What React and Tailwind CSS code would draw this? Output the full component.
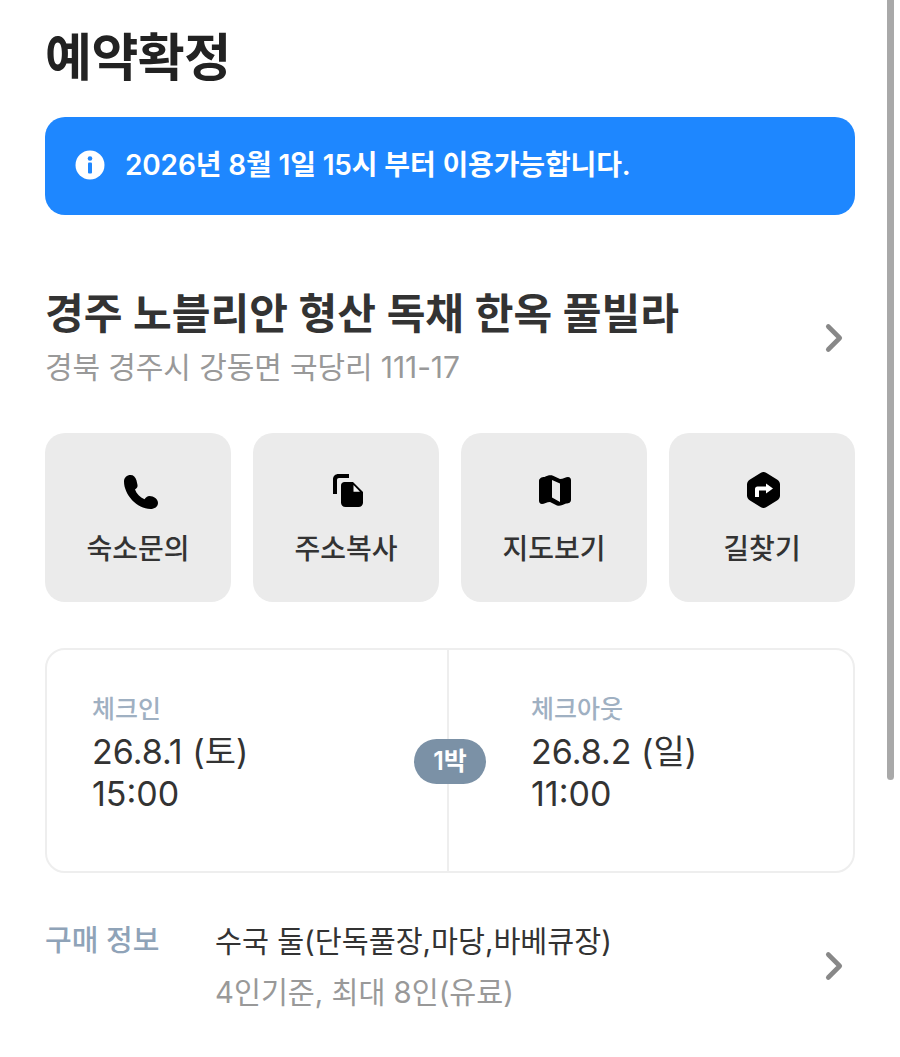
import { ChevronRight } from "lucide-react";

const FONT = "font-['Inter','Noto_Sans_CJK_KR',sans-serif]";

const PhoneIcon = () => (
  <svg viewBox="0 0 34 34" className="ml-[6px] h-[34px] w-[34px]" fill="#000">
    <path d="M0 6.500C0 2.500 3 0 6.500 0 9.500 0 11.500 2 12.500 5.500L13.500 10c.4 2-.6 3.200-2.500 4.500 1.800 4.500 4.800 7.700 9.500 9.800 1.300-2 2.800-3.300 5-3.300 4.300 0 8.500 3 8.500 7 0 3.800-3.500 6-7.500 6C13 34 0 19.500 0 6.500z" />
  </svg>
);

const CopyIcon = () => (
  <svg viewBox="0 0 30 33" className="mt-[-3px] ml-[4px] h-[33px] w-[30px]" fill="#000">
    <path d="M0 20V5.500C0 2.200 2.200 0 5.500 0H16v4H6C4.800 4 4 4.800 4 6v14z" />
    <path d="M11.500 8H20L30 18V28.500C30 31.200 28.200 33 25.500 33H12.500C9.800 33 8 31.200 8 28.500V11.500C8 9.500 9.500 8 11.500 8z" />
    <path fill="#f4f4f4" d="M20.500 11L27 17.800H20.500z" />
  </svg>
);

const MapIcon = () => (
  <svg viewBox="0 0 32 31" className="mt-[-3px] ml-[2px] h-[31px] w-[32px]" fill="#000">
    <path
      fillRule="evenodd"
      d="M0 6C0 3.500 2.500 2 5.500 2 8.500.5 11.500-.3 14 .8L21 4C24 4 27 2 29 2c2 0 3 1.200 3 3.500V24.500C32 27.500 30 28.500 27 28.500c-3 1.500-6.500 3-9 1.900L11 27c-3 0-6 2-8 2-2 0-3-1.500-3-3.500zM13 5L21 8.500V27L13 22.500z"
    />
  </svg>
);

const RouteIcon = () => (
  <svg viewBox="0 0 33 36" className="mt-[-4px] ml-[3px] h-[36px] w-[33px]">
    <path
      fill="#000"
      d="M13.500 1c2-1.200 4-1.200 6 0L30 7.500c2 1.200 3 3 3 5v11c0 2-1 3.800-3 5L19.500 35c-2 1.200-4 1.200-6 0L3 28.500c-2-1.200-3-3-3-5v-11c0-2 1-3.800 3-5z"
    />
    <path fill="#fff" d="M19 11.500L26 16.500 19 21.500V18.500H12V25H8V17c0-1.500 1-2.500 2.500-2.500H19z" />
  </svg>
);

const ACTIONS = [
  { label: "숙소문의", icon: <PhoneIcon /> },
  { label: "주소복사", icon: <CopyIcon /> },
  { label: "지도보기", icon: <MapIcon /> },
  { label: "길찾기", icon: <RouteIcon /> },
];

const DateBlock = ({ label, date, time }) => (
  <div className="flex flex-col">
    <span className="text-[25px] leading-[30px] font-medium text-[#9fb0c2]">{label}</span>
    <span className="mt-[7px] text-[34px] leading-[42px] text-[#333]">{date}</span>
    <span className="text-[34px] leading-[42px] text-[#333]">{time}</span>
  </div>
);

export default function App() {
  return (
    <div className={`${FONT} relative h-[1057px] w-[900px] overflow-hidden bg-white`}>
      <div className="absolute top-0 left-[887px] h-[780px] w-[7px] rounded-b-full bg-[#a9a9a9]" />

      <div className="ml-[45px] flex w-[810px] flex-col">
        <h1 className="mt-[26px] text-[51px] leading-[64px] font-bold tracking-[-0.5px] text-[#222]">예약확정</h1>

        <div className="mt-[27px] flex h-[98px] items-center rounded-[20px] bg-[#1e87ff] pl-[30px] text-white">
          <svg viewBox="0 0 30 30" className="mt-[-3px] h-[30px] w-[30px]">
            <circle cx="15" cy="15" r="14.500" fill="#fff" />
            <circle cx="15" cy="8.500" r="2.300" fill="#1e87ff" />
            <rect x="13" y="12.500" width="4" height="11" rx="1" fill="#1e87ff" />
          </svg>
          <span className="mt-[-2px] ml-[20px] text-[28px] font-semibold tracking-[-0.15px]">
            2026년 8월 1일 15시 부터 이용가능합니다.
          </span>
        </div>

        <div className="mt-[71px] flex items-center justify-between">
          <div>
            <div className="text-[42.100px] leading-[56px] font-semibold text-[#333]">
              경주 노블리안 형산 독채 한옥 풀빌라
            </div>
            <div className="mt-[5px] text-[30px] leading-[40px] tracking-[-0.1px] text-[#999]">
              경북 경주시 강동면 국당리 111-17
            </div>
          </div>
          <ChevronRight size={46} strokeWidth={2.4} className="mt-[2px] mr-[-2px] text-[#888]" />
        </div>

        <div className="mt-[46px] grid grid-cols-4 gap-[22px]">
          {ACTIONS.map((action) => (
            <div
              key={action.label}
              className="flex h-[169px] flex-col items-center rounded-[20px] bg-[#ebebeb] pt-[40px]"
            >
              <div className="flex h-[38px] items-center justify-center">{action.icon}</div>
              <span className="mt-[18px] text-[28px] leading-[40px] font-medium text-[#333]">{action.label}</span>
            </div>
          ))}
        </div>

        <div className="relative mt-[46px] grid h-[225px] grid-cols-[402px_1fr] rounded-[20px] border-2 border-[#eeeeee]">
          <div className="border-r-2 border-[#eeeeee] pt-[44px] pl-[45px]">
            <DateBlock label="체크인" date="26.8.1 (토)" time="15:00" />
          </div>
          <div className="pt-[44px] pl-[82px]">
            <DateBlock label="체크아웃" date="26.8.2 (일)" time="11:00" />
          </div>
          <div className="absolute top-[89px] left-[367px] flex h-[45px] w-[72px] items-center justify-center rounded-full bg-[#7b91a6] text-[25px] font-semibold text-white">
            1박
          </div>
        </div>

        <div className="mt-[46px] flex items-start">
          <span className="w-[170px] text-[29px] leading-[44px] font-medium text-[#8fa3b8]">구매 정보</span>
          <div className="flex-1">
            <div className="mt-[1px] text-[29.300px] leading-[44px] text-[#333]">수국 둘(단독풀장,마당,바베큐장)</div>
            <div className="mt-[7px] text-[29.300px] leading-[44px] text-[#999]">4인기준, 최대 8인(유료)</div>
          </div>
          <ChevronRight size={46} strokeWidth={2.4} className="mt-[24px] mr-[-2px] text-[#888]" />
        </div>
      </div>
    </div>
  );
}
